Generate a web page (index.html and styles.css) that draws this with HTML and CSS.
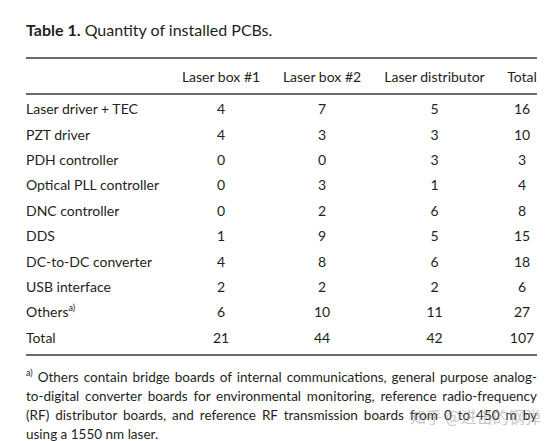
FILE: index.html
```html
<!DOCTYPE html>
<html>
<head>
    <link rel="stylesheet" href="styles.css">
</head>
<body>
    <div class="page">
        <div class="caption"><b>Table 1.</b> Quantity of installed PCBs.</div>

        <table class="pcb-table">
            <thead>
                <tr>
                    <th class="name"></th>
                    <th class="c1">Laser box #1</th>
                    <th class="c2">Laser box #2</th>
                    <th class="c3">Laser distributor</th>
                    <th class="c4">Total</th>
                </tr>
            </thead>
            <tbody>
                <tr class="first"><td class="name">Laser driver + TEC</td><td>4</td><td>7</td><td>5</td><td class="c4">16</td></tr>
                <tr><td class="name">PZT driver</td><td>4</td><td>3</td><td>3</td><td class="c4">10</td></tr>
                <tr><td class="name">PDH controller</td><td>0</td><td>0</td><td>3</td><td class="c4">3</td></tr>
                <tr><td class="name">Optical PLL controller</td><td>0</td><td>3</td><td>1</td><td class="c4">4</td></tr>
                <tr><td class="name">DNC controller</td><td>0</td><td>2</td><td>6</td><td class="c4">8</td></tr>
                <tr><td class="name">DDS</td><td>1</td><td>9</td><td>5</td><td class="c4">15</td></tr>
                <tr><td class="name">DC-to-DC converter</td><td>4</td><td>8</td><td>6</td><td class="c4">18</td></tr>
                <tr><td class="name">USB interface</td><td>2</td><td>2</td><td>2</td><td class="c4">6</td></tr>
                <tr><td class="name">Others<sup>a)</sup></td><td>6</td><td>10</td><td>11</td><td class="c4">27</td></tr>
                <tr class="last"><td class="name">Total</td><td>21</td><td>44</td><td>42</td><td class="c4">107</td></tr>
            </tbody>
        </table>

        <p class="footnote"><sup>a)</sup> Others contain bridge boards of internal communications, general purpose analog-to-digital converter boards for environmental monitoring, reference radio-frequency (RF) distributor boards, and reference RF transmission boards from 0 to 450 m by using a 1550 nm laser.</p>
    </div>

    <div class="watermark">知乎 @进击的钢弹</div>
</body>
</html>
```

FILE: styles.css
```css
body {
    position: relative;
    margin: 0;
    height: 441px;
    overflow: hidden;
    background-color: #ffffff;
    color: #231f20;
    font-family: Lato, "Noto Sans", sans-serif;
}

.page {
    width: 511px;
    padding-left: 26px;
    padding-top: 20px;
}

.caption {
    font-size: 16px;
    line-height: 20px;
    margin-bottom: 17px;
}

.caption b {
    font-weight: 700;
}

.pcb-table {
    width: 511px;
    border-collapse: collapse;
    font-size: 14px;
    table-layout: fixed;
}

.pcb-table thead tr {
    border-top: 2px solid #6b6b6b;
    border-bottom: 2px solid #6b6b6b;
}

.pcb-table th {
    font-weight: 400;
    height: 34px;
    padding: 0;
    text-align: center;
}

.pcb-table td {
    height: 25.4px;
    padding: 0;
    text-align: center;
}

.pcb-table .name {
    width: 154px;
    text-align: left;
}

.pcb-table .c1 { width: 82px; }
.pcb-table .c2 { width: 120px; }
.pcb-table .c3 { width: 105px; }
.pcb-table .c4 {
    width: 30px;
    padding-left: 20px;
}

.pcb-table tr.first td {
    padding-top: 1px;
}

.pcb-table tr.last {
    border-bottom: 2px solid #6b6b6b;
}

.pcb-table tr.last td {
    padding-bottom: 4px;
}

sup {
    font-size: 9px;
    line-height: 0;
    vertical-align: baseline;
    position: relative;
    top: -6px;
}

.footnote {
    margin: 12px 0 0;
    width: 511px;
    font-size: 13.5px;
    line-height: 19px;
    text-align: justify;
}

.watermark {
    position: absolute;
    left: 410px;
    top: 404px;
    white-space: nowrap;
    font-size: 16px;
    color: rgba(150, 150, 150, 0.55);
    font-family: "Noto Sans CJK SC", sans-serif;
}
```
